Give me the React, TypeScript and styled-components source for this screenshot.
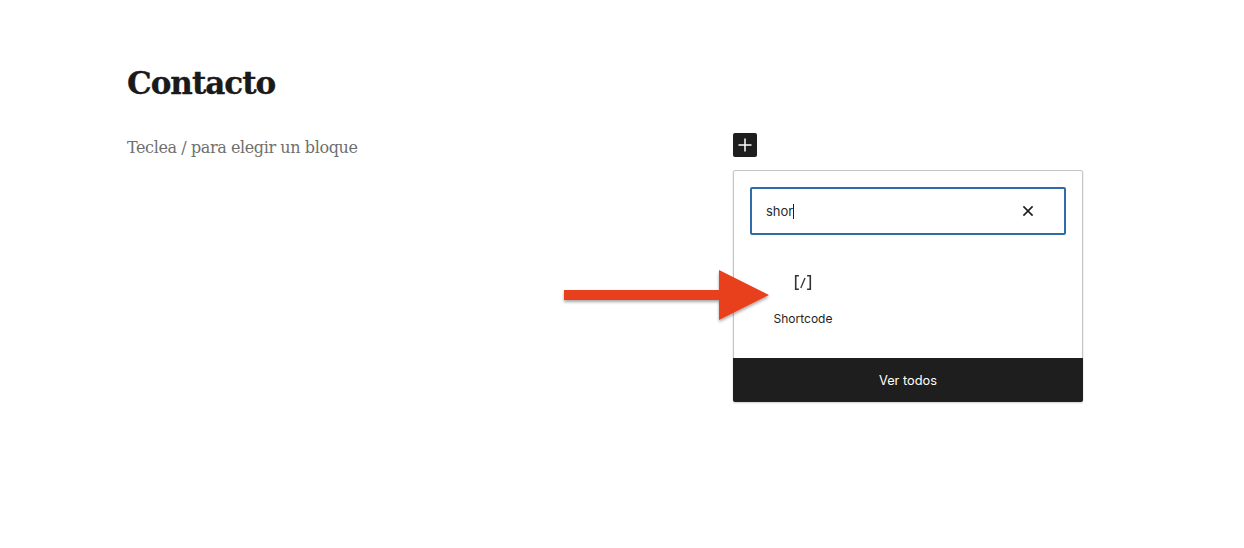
import React from "react";
import styled, { createGlobalStyle } from "styled-components";

const GlobalStyle = createGlobalStyle`
  html, body {
    margin: 0;
    padding: 0;
    background: #fff;
  }
  body {
    font-family: "Inter", "Liberation Sans", sans-serif;
    color: #1e1e1e;
  }
`;

function App() {
  return (
    <Page>
      <GlobalStyle />
      <Editor>
        <Title>Contacto</Title>
        <Placeholder>Teclea / para elegir un bloque</Placeholder>
      </Editor>
      <InserterColumn>
        <PlusButton aria-label="Añadir bloque">
          <svg width="24" height="24" viewBox="0 0 24 24" fill="#fff">
            <path d="M12.75 5.5h-1.5v5.75H5.5v1.5h5.75v5.75h1.5v-5.75h5.75v-1.5h-5.75z" />
          </svg>
        </PlusButton>
        <Popover>
          <SearchArea>
            <SearchBox>
              <SearchText>
                shor
                <Caret />
              </SearchText>
              <ClearButton aria-label="Borrar">
                <svg width="14" height="14" viewBox="0 0 14 14" fill="none" stroke="#1e1e1e" strokeWidth="1.6">
                  <path d="M2.4 2.4l9.2 9.2M11.6 2.4l-9.2 9.2" />
                </svg>
              </ClearButton>
            </SearchBox>
          </SearchArea>
          <Results>
            <BlockItem>
              <BlockIcon>
                <svg width="20" height="20" viewBox="0 0 20 20" fill="none" stroke="#333">
                  <path d="M5.9 4.7H2.7v13.6h3.2" strokeWidth="1.6" />
                  <path d="M14.1 4.7h3.2v13.6h-3.2" strokeWidth="1.6" />
                  <path d="M12 7L7.8 17" strokeWidth="1.3" />
                </svg>
              </BlockIcon>
              <BlockLabel>Shortcode</BlockLabel>
            </BlockItem>
          </Results>
          <Footer>Ver todos</Footer>
        </Popover>
      </InserterColumn>
      <Arrow width="220" height="70" viewBox="0 0 220 70">
        <defs>
          <filter id="arrow-shadow" x="-10%" y="-20%" width="120%" height="150%">
            <feDropShadow dx="0" dy="2" stdDeviation="1.6" floodColor="#000" floodOpacity="0.35" />
          </filter>
        </defs>
        <path
          d="M4 20H159V0L209 25L159 50V30H4z"
          fill="#e83f1f"
          filter="url(#arrow-shadow)"
        />
      </Arrow>
    </Page>
  );
}

export default App;

const Page = styled.div`
  position: relative;
  width: 1244px;
  height: 548px;
  display: flex;
  align-items: flex-start;
  overflow: hidden;
  background: #fff;
`;

const Editor = styled.div`
  width: 606px;
  margin-left: 127px;
  padding-top: 63px;
`;

const Title = styled.h1`
  margin: 0;
  font-family: "DejaVu Serif", "Liberation Serif", serif;
  font-weight: 700;
  font-size: 31px;
  line-height: 40px;
  letter-spacing: -1px;
  color: #1a1a1a;
  -webkit-text-stroke: 0.3px #1a1a1a;
`;

const Placeholder = styled.p`
  margin: 35px 0 0;
  font-family: "DejaVu Serif", "Liberation Serif", serif;
  font-size: 16px;
  line-height: 20px;
  letter-spacing: -0.4px;
  color: #6f6f6f;
`;

const InserterColumn = styled.div`
  display: flex;
  flex-direction: column;
  align-items: flex-start;
  padding-top: 133px;
`;

const PlusButton = styled.button`
  width: 24px;
  height: 24px;
  padding: 0;
  border: none;
  border-radius: 2px;
  background: #1e1e1e;
  display: flex;
  align-items: center;
  justify-content: center;
`;

const Popover = styled.div`
  margin-top: 13px;
  width: 350px;
  height: 232px;
  box-sizing: border-box;
  display: flex;
  flex-direction: column;
  background: #fff;
  border: 1px solid #c4c4c4;
  border-radius: 2px;
  box-shadow: 0 1px 2px rgba(0, 0, 0, 0.2);
`;

const SearchArea = styled.div`
  padding: 16px 16px 0;
`;

const SearchBox = styled.div`
  height: 48px;
  box-sizing: border-box;
  display: flex;
  align-items: center;
  justify-content: space-between;
  padding: 0 29px 0 14px;
  border: 2px solid #2f6ca8;
  border-radius: 2px;
`;

const SearchText = styled.span`
  display: flex;
  align-items: center;
  font-size: 13px;
  color: #2a2a2a;
`;

const Caret = styled.span`
  width: 1px;
  height: 15px;
  background: #1e1e1e;
`;

const ClearButton = styled.button`
  width: 14px;
  height: 14px;
  padding: 0;
  border: none;
  background: none;
  display: flex;
`;

const Results = styled.div`
  flex: 1;
  padding: 36px 0 0 15px;
`;

const BlockItem = styled.div`
  width: 108px;
  display: flex;
  flex-direction: column;
  align-items: center;
`;

const BlockIcon = styled.div`
  width: 20px;
  height: 20px;
  display: flex;
`;

const BlockLabel = styled.span`
  margin-top: 20px;
  font-size: 12px;
  line-height: 16px;
  color: #1e1e1e;
`;

const Footer = styled.div`
  height: 44px;
  margin: 0 -1px -1px;
  display: flex;
  align-items: center;
  justify-content: center;
  background: #1e1e1e;
  border-radius: 0 0 2px 2px;
  color: #fff;
  font-size: 12.8px;
  font-weight: 400;
`;

const Arrow = styled.svg`
  position: absolute;
  left: 560px;
  top: 270px;
`;
